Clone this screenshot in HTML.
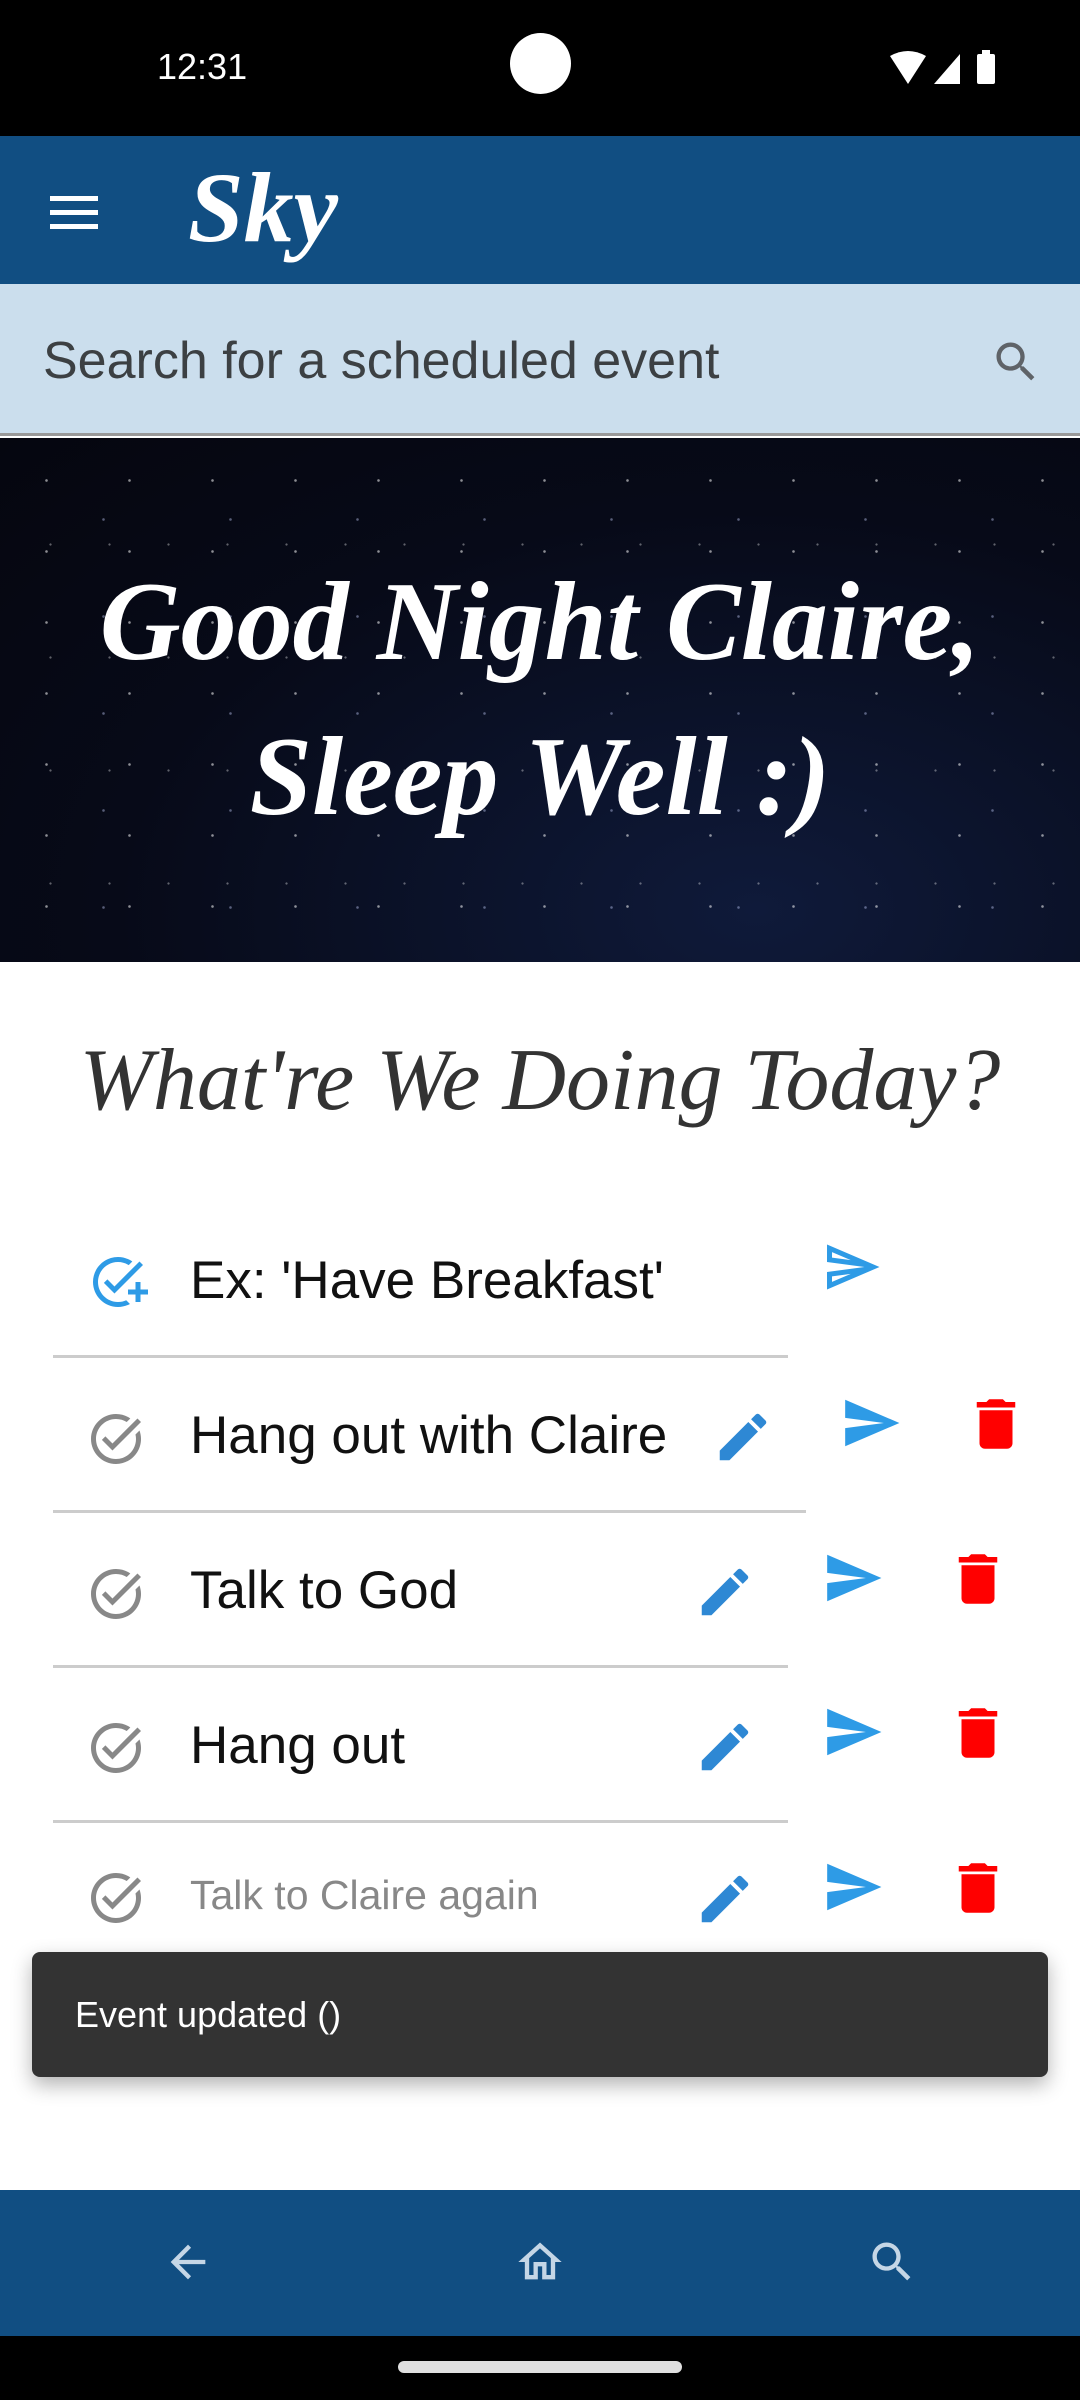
<!DOCTYPE html>
<html><head><meta charset="utf-8"><style>
*{margin:0;padding:0;box-sizing:border-box}
body{width:1080px;height:2400px;position:relative;overflow:hidden;background:#fff;font-family:"Liberation Sans",sans-serif}
.a{position:absolute}
.script{font-family:"Liberation Serif",serif;font-style:italic}
.row{position:absolute;left:190px;font-size:53px;color:#111}
.div{position:absolute;left:53px;height:3px;background:#ccc}
svg{position:absolute}
</style></head><body>
<div class="a" style="left:0;top:0;width:1080px;height:136px;background:#000"></div>
<div class="a" style="left:157px;top:46px;color:#fff;font-size:36px">12:31</div>
<div class="a" style="left:510px;top:33px;width:61px;height:61px;border-radius:50%;background:#fff"></div>
<svg style="left:890px;top:50px" width="120" height="38" viewBox="0 0 120 38"><path d="M0 6 Q18 -4 36 6 L18 34Z" fill="#fff"/><path d="M44 34 L70 4 V34Z" fill="#fff"/><rect x="87" y="4" width="18" height="30" rx="2" fill="#fff"/><rect x="92" y="0" width="8" height="5" fill="#fff"/></svg>

<div class="a" style="left:0;top:136px;width:1080px;height:148px;background:#114e82"></div>
<div class="a" style="left:50px;top:196px;width:48px;height:5px;background:#fff;box-shadow:0 14px 0 #fff,0 28px 0 #fff"></div>
<div class="a script" style="left:188px;top:150px;color:#fff;font-size:100px;font-weight:bold">Sky</div>

<div class="a" style="left:0;top:284px;width:1080px;height:152px;background:#cbdeed;border-bottom:3px solid #999"></div>
<div class="a" style="left:43px;top:331px;color:#3c4043;font-size:52px">Search for a scheduled event</div>
<svg style="left:990px;top:336px" width="52" height="52" viewBox="0 0 24 24"><path fill="#5f6368" d="M15.5 14h-.79l-.28-.27C15.41 12.59 16 11.11 16 9.5 16 5.91 13.09 3 9.5 3S3 5.910 3 9.5 5.91 16 9.5 16c1.61 0 3.09-.59 4.23-1.57l.27.28v.79l5 4.99L20.49 19l-4.99-5zm-6 0C7.01 14 5 11.99 5 9.5S7.01 5 9.5 5 14 7.01 14 9.5 11.99 14 9.5 14z"/></svg>

<div class="a" style="left:0;top:438px;width:1080px;height:524px;background:radial-gradient(ellipse at 70% 90%,#0f1a3a 0%,#070a18 60%,#05060f 100%)"></div>
<div class="a" style="left:0;top:438px;width:1080px;height:524px;background-image:radial-gradient(circle,rgba(255,255,255,.9) 1px,transparent 1.6px),radial-gradient(circle,rgba(200,210,255,.7) 1px,transparent 1.6px),radial-gradient(circle,rgba(255,255,255,.6) 0.8px,transparent 1.4px);background-size:83px 71px,127px 97px,59px 113px;background-position:5px 7px,40px 33px,21px 50px;opacity:.6"></div>
<div class="a script" style="left:0;top:545px;width:1080px;text-align:center;color:#fff;font-size:112px;font-weight:bold;line-height:155px">Good Night Claire,<br>Sleep Well :)</div>

<div class="a script" style="left:0;top:1030px;width:1080px;text-align:center;color:#333;font-size:88px">What're We Doing Today?</div>

<svg style="left:88px;top:1252px" width="60" height="60" viewBox="0 0 24 24"><path fill="#2e9be6" d="M22 5.18L10.59 16.6l-4.24-4.24 1.41-1.41 2.83 2.83 10-10L22 5.18zM12 20c-4.41 0-8-3.59-8-8s3.59-8 8-8c1.57 0 3.04.46 4.28 1.25l1.45-1.45C16.1 2.67 14.13 2 12 2 6.48 2 2 6.48 2 12s4.48 10 10 10c1.73 0 3.36-.44 4.780-1.22l-1.5-1.5c-1 .46-2.11.72-3.28.72zm7-5h-3v2h3v3h2v-3h3v-2h-3v-3h-2v3z"/></svg>
<div class="row" style="top:1250px">Ex: 'Have Breakfast'</div>
<svg style="left:822px;top:1237px" width="60" height="60" viewBox="0 0 24 24"><path fill="#2e9be6" d="M4.01 6.03l7.51 3.22-7.52-1 .01-2.22m7.5 8.72L4 17.97v-2.22l7.51-1M2.01 3L2 10l15 2-15 2 .01 7L23 12 2.01 3z"/></svg>
<div class="div" style="top:1355px;width:735px"></div>

<div class="div" style="top:1510px;width:753px"></div>
<div class="div" style="top:1665px;width:735px"></div>
<div class="div" style="top:1820px;width:735px"></div>

<div class="row" style="top:1405px">Hang out with Claire</div>
<div class="row" style="top:1560px">Talk to God</div>
<div class="row" style="top:1715px">Hang out</div>
<div class="row" style="top:1872px;font-size:41px;color:#888">Talk to Claire again</div>

<svg style="left:86px;top:1409px" width="60" height="60" viewBox="0 0 24 24"><path fill="#888" d="M22 5.18L10.59 16.6l-4.24-4.24 1.41-1.41 2.83 2.83 10-10L22 5.18zm-2.21 5.04c.13.57.21 1.17.21 1.78 0 4.42-3.58 8-8 8s-8-3.58-8-8 3.58-8 8-8c1.58 0 3.04.46 4.28 1.22l1.44-1.44C16.1 2.67 14.13 2 12 2 6.48 2 2 6.48 2 12s4.48 10 10 10 10-4.48 10-10c0-1.19-.22-2.33-.6-3.39l-1.61 1.61z"/></svg>
<svg style="left:86px;top:1564px" width="60" height="60" viewBox="0 0 24 24"><path fill="#888" d="M22 5.18L10.59 16.6l-4.24-4.24 1.41-1.41 2.83 2.83 10-10L22 5.18zm-2.21 5.04c.13.57.21 1.17.21 1.78 0 4.42-3.58 8-8 8s-8-3.58-8-8 3.58-8 8-8c1.58 0 3.04.46 4.28 1.22l1.44-1.44C16.1 2.67 14.13 2 12 2 6.48 2 2 6.48 2 12s4.48 10 10 10 10-4.48 10-10c0-1.19-.22-2.33-.6-3.39l-1.61 1.61z"/></svg>
<svg style="left:86px;top:1718px" width="60" height="60" viewBox="0 0 24 24"><path fill="#888" d="M22 5.18L10.59 16.6l-4.24-4.24 1.41-1.41 2.83 2.83 10-10L22 5.18zm-2.21 5.04c.13.57.21 1.17.21 1.78 0 4.42-3.58 8-8 8s-8-3.58-8-8 3.58-8 8-8c1.58 0 3.04.46 4.28 1.22l1.44-1.44C16.1 2.67 14.13 2 12 2 6.48 2 2 6.48 2 12s4.48 10 10 10 10-4.48 10-10c0-1.19-.22-2.33-.6-3.39l-1.61 1.61z"/></svg>
<svg style="left:86px;top:1868px" width="60" height="60" viewBox="0 0 24 24"><path fill="#888" d="M22 5.18L10.59 16.6l-4.24-4.24 1.41-1.41 2.83 2.83 10-10L22 5.18zm-2.21 5.04c.13.57.21 1.17.21 1.78 0 4.42-3.58 8-8 8s-8-3.58-8-8 3.58-8 8-8c1.58 0 3.04.46 4.28 1.22l1.44-1.44C16.1 2.67 14.13 2 12 2 6.48 2 2 6.48 2 12s4.48 10 10 10 10-4.48 10-10c0-1.19-.22-2.33-.6-3.39l-1.61 1.61z"/></svg>

<svg style="left:712px;top:1406px" width="62" height="62" viewBox="0 0 24 24"><path fill="#2e88d4" d="M3 17.25V21h3.75L17.81 9.94l-3.75-3.75L3 17.25zM20.71 7.04c.39-.39.39-1.02 0-1.41l-2.34-2.34a.9959.9959 0 0 0-1.41 0l-1.83 1.83 3.75 3.75 1.83-1.83z"/></svg>
<svg style="left:694px;top:1561px" width="62" height="62" viewBox="0 0 24 24"><path fill="#2e88d4" d="M3 17.25V21h3.75L17.81 9.94l-3.75-3.75L3 17.25zM20.71 7.04c.39-.39.39-1.02 0-1.41l-2.34-2.34a.9959.9959 0 0 0-1.41 0l-1.83 1.83 3.75 3.75 1.83-1.83z"/></svg>
<svg style="left:694px;top:1716px" width="62" height="62" viewBox="0 0 24 24"><path fill="#2e88d4" d="M3 17.25V21h3.75L17.81 9.94l-3.75-3.75L3 17.25zM20.71 7.04c.39-.39.39-1.02 0-1.41l-2.34-2.34a.9959.9959 0 0 0-1.41 0l-1.83 1.83 3.75 3.75 1.83-1.83z"/></svg>
<svg style="left:694px;top:1868px" width="62" height="62" viewBox="0 0 24 24"><path fill="#2e88d4" d="M3 17.25V21h3.75L17.81 9.94l-3.75-3.75L3 17.25zM20.71 7.04c.39-.39.39-1.02 0-1.41l-2.34-2.34a.9959.9959 0 0 0-1.41 0l-1.83 1.83 3.75 3.75 1.83-1.83z"/></svg>

<svg style="left:840px;top:1392px" width="62" height="62" viewBox="0 0 24 24"><path fill="#2e9be6" d="M2.01 21L23 12 2.01 3 2 10l15 2-15 2z"/></svg>
<svg style="left:822px;top:1547px" width="62" height="62" viewBox="0 0 24 24"><path fill="#2e9be6" d="M2.01 21L23 12 2.01 3 2 10l15 2-15 2z"/></svg>
<svg style="left:822px;top:1701px" width="62" height="62" viewBox="0 0 24 24"><path fill="#2e9be6" d="M2.01 21L23 12 2.01 3 2 10l15 2-15 2z"/></svg>
<svg style="left:822px;top:1856px" width="62" height="62" viewBox="0 0 24 24"><path fill="#2e9be6" d="M2.01 21L23 12 2.01 3 2 10l15 2-15 2z"/></svg>

<svg style="left:963px;top:1391px" width="66" height="66" viewBox="0 0 24 24"><path fill="#f00" d="M6 19c0 1.1.9 2 2 2h8c1.1 0 2-.9 2-2V7H6v12zM19 4h-3.5l-1-1h-5l-1 1H5v2h14V4z"/></svg>
<svg style="left:945px;top:1546px" width="66" height="66" viewBox="0 0 24 24"><path fill="#f00" d="M6 19c0 1.1.9 2 2 2h8c1.1 0 2-.9 2-2V7H6v12zM19 4h-3.5l-1-1h-5l-1 1H5v2h14V4z"/></svg>
<svg style="left:945px;top:1700px" width="66" height="66" viewBox="0 0 24 24"><path fill="#f00" d="M6 19c0 1.1.9 2 2 2h8c1.1 0 2-.9 2-2V7H6v12zM19 4h-3.5l-1-1h-5l-1 1H5v2h14V4z"/></svg>
<svg style="left:945px;top:1855px" width="66" height="66" viewBox="0 0 24 24"><path fill="#f00" d="M6 19c0 1.1.9 2 2 2h8c1.1 0 2-.9 2-2V7H6v12zM19 4h-3.5l-1-1h-5l-1 1H5v2h14V4z"/></svg>

<div class="a" style="left:32px;top:1952px;width:1016px;height:125px;background:#333;border-radius:8px;box-shadow:0 8px 20px rgba(0,0,0,.3)"></div>
<div class="a" style="left:75px;top:1994px;color:#fff;font-size:36px">Event updated ()</div>

<div class="a" style="left:0;top:2190px;width:1080px;height:146px;background:#114e82"></div>
<svg style="left:162px;top:2236px" width="52" height="52" viewBox="0 0 24 24"><path fill="#c5d6e6" d="M20 11H7.83l5.59-5.59L12 4l-8 8 8 8 1.41-1.41L7.83 13H20v-2z"/></svg>
<svg style="left:514px;top:2236px" width="52" height="52" viewBox="0 0 24 24"><path fill="#c5d6e6" d="M12 5.69l5 4.5V18h-2v-6H9v6H7v-7.81l5-4.5M12 3L2 12h3v8h6v-6h2v6h6v-8h3L12 3z"/></svg>
<svg style="left:866px;top:2236px" width="52" height="52" viewBox="0 0 24 24"><path fill="#c5d6e6" d="M15.5 14h-.79l-.28-.27C15.41 12.59 16 11.11 16 9.5 16 5.91 13.09 3 9.5 3S3 5.91 3 9.5 5.91 16 9.5 16c1.61 0 3.09-.59 4.23-1.57l.27.28v.79l5 4.99L20.49 19l-4.99-5zm-6 0C7.01 14 5 11.99 5 9.5S7.01 5 9.5 5 14 7.01 14 9.5 11.99 14 9.5 14z"/></svg>
<div class="a" style="left:0;top:2336px;width:1080px;height:64px;background:#000"></div>
<div class="a" style="left:398px;top:2361px;width:284px;height:12px;border-radius:6px;background:#e0e0e0"></div>
</body></html>
